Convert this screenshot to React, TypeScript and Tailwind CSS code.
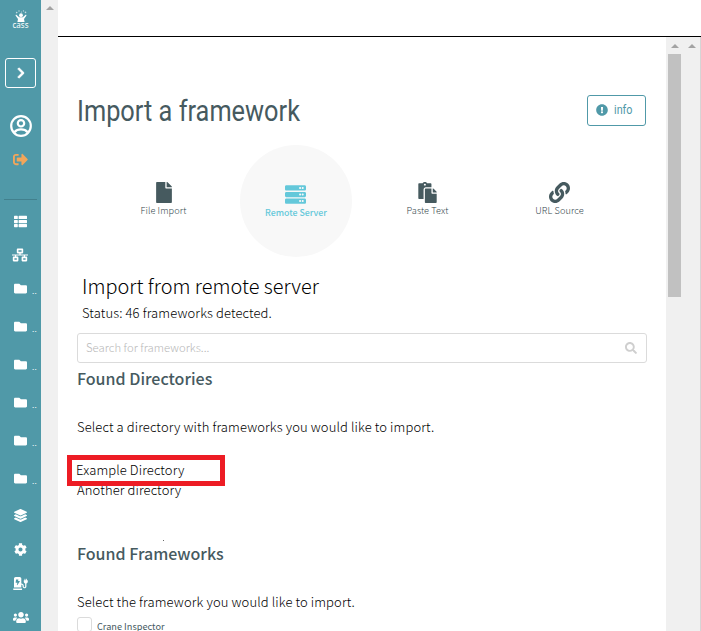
import React from "react";
import {
  FaChargingStation,
  FaChevronRight,
  FaCog,
  FaExclamationCircle,
  FaFile,
  FaFolder,
  FaLayerGroup,
  FaLink,
  FaNetworkWired,
  FaPaste,
  FaSearch,
  FaServer,
  FaSignOutAlt,
  FaThList,
  FaUsers,
} from "react-icons/fa";

const folders = [1, 2, 3, 4, 5, 6];

function CassLogo() {
  return (
    <div className="flex h-[19px] w-[18px] flex-col items-center text-white">
      <svg viewBox="0 0 18 12" className="h-3 w-[18px] shrink-0" fill="currentColor">
        <circle cx="9" cy="5.2" r="1.9" />
        <path d="M4 4.6 L7.2 7.2 H10.8 L14 4.6 L14.5 5.6 L12 9 L12.6 12 H5.4 L6 9 L3.5 5.6 Z" />
        <g opacity=".65">
          <circle cx="4.7" cy="2.6" r=".8" />
          <circle cx="7" cy="1" r=".7" />
          <circle cx="9.5" cy="2" r=".6" />
          <circle cx="11.5" cy=".9" r=".7" />
          <circle cx="13.5" cy="2.4" r=".8" />
        </g>
      </svg>
      <span className="font-['Noto_Sans'] text-[8px] leading-[6px]">cass</span>
    </div>
  );
}

function AccountIcon() {
  return (
    <svg viewBox="0 0 22 22" className="size-[22px]" fill="none" stroke="currentColor" strokeWidth="2.2">
      <circle cx="11" cy="11" r="9.8" />
      <circle cx="11" cy="8.3" r="3.2" />
      <path d="M4.4 17.2 C6 15.2 8.5 14.4 11 14.4 C13.5 14.4 16 15.2 17.6 17.2" />
    </svg>
  );
}

function NavRow({ children }: { children: React.ReactNode }) {
  return <div className="flex h-[34px] shrink-0 items-center justify-center text-white">{children}</div>;
}

function Sidebar() {
  return (
    <nav className="flex w-[41px] shrink-0 flex-col overflow-hidden bg-[#5099a8]">
      <div className="flex h-[58px] shrink-0 justify-center pt-[10px]">
        <CassLogo />
      </div>
      <div className="flex justify-center">
        <button className="flex h-[30px] w-[31px] items-center justify-center rounded-[3px] border border-white text-white">
          <FaChevronRight className="size-3" stroke="currentColor" strokeWidth="30" />
        </button>
      </div>
      <div className="mt-[27px] flex justify-center text-white">
        <AccountIcon />
      </div>
      <div className="mt-[15px] flex justify-center text-[#f2a65a]">
        <FaSignOutAlt className="size-[15px]" />
      </div>
      <div className="mx-1 mt-[32px] h-px shrink-0 bg-[#42808d]" />
      <div className="mt-[4px] flex flex-col">
        <NavRow>
          <FaThList className="size-[13px]" />
        </NavRow>
        <NavRow>
          <FaNetworkWired className="-ml-px h-[14px] w-4" />
        </NavRow>
      </div>
      <div className="-mt-[3px] flex flex-col">
        {folders.map((n) => (
          <div key={n} className="flex h-[38px] shrink-0 items-center pl-[14px] text-white">
            <FaFolder className="size-[13px]" />
            <span className="ml-[5px] mt-[5px] text-[8px] leading-none tracking-[0.4px] text-white">..</span>
          </div>
        ))}
      </div>
      <div className="mt-px flex flex-col">
        <NavRow>
          <FaLayerGroup className="size-[13px]" />
        </NavRow>
        <NavRow>
          <FaCog className="size-[13px]" />
        </NavRow>
        <NavRow>
          <FaChargingStation className="h-[13px] w-[15px]" />
        </NavRow>
        <NavRow>
          <FaUsers className="h-[13px] w-4" />
        </NavRow>
      </div>
    </nav>
  );
}

function ArrowUp() {
  return (
    <svg viewBox="0 0 8 4" className="h-1 w-2" fill="#a3a3a3">
      <path d="M0 4 L4 0 L8 4 Z" />
    </svg>
  );
}

function SourceTab({ icon, label }: { icon: React.ReactNode; label: string }) {
  return (
    <div className="flex w-[132px] flex-col items-center pt-[37px] text-[#465a5f]">
      {icon}
      <span className="-ml-px whitespace-nowrap text-[9.2px] font-light leading-[14px] tracking-[0.08px] text-[#33464b]">{label}</span>
    </div>
  );
}

function ImportPage() {
  return (
    <main className="flex min-w-0 flex-1 flex-col overflow-hidden bg-white pl-[19px] pr-[19px]">
      <header className="flex h-[108px] shrink-0 items-start justify-between pr-px pt-[58px]">
        <h1 className="origin-left scale-x-[0.845] whitespace-nowrap font-[Roboto] text-[30px] leading-[32px] text-[#465a5f]">
          Import a framework
        </h1>
        <button className="flex h-[31px] w-[59px] shrink-0 items-center rounded-[3px] border border-[#5099a8] pb-[2px] pl-[8px] text-[#5099a8]">
          <FaExclamationCircle className="size-3" />
          <span className="ml-[6px] origin-left scale-x-[0.9] font-[Roboto] text-[12px] leading-4">info</span>
        </button>
      </header>

      <div className="flex h-[112px] shrink-0 pl-[21px]">
        <SourceTab icon={<FaFile className="h-[21px] w-4" />} label="File Import" />
        <div className="flex w-[132px] justify-center">
          <div className="flex size-[112px] flex-col items-center rounded-full bg-[#f8f8f8] pt-[39px] text-[#64c8da]">
            <FaServer className="-ml-px size-[21px]" />
            <span className="mt-px whitespace-nowrap text-[8.8px] font-medium leading-[14px]">Remote Server</span>
          </div>
        </div>
        <SourceTab icon={<FaPaste className="-ml-px h-[21px] w-[19px]" />} label="Paste Text" />
        <SourceTab icon={<FaLink className="-ml-px size-[21px]" />} label="URL Source" />
      </div>

      <section className="shrink-0 pl-[5px] pt-[13px]">
        <h2 className="whitespace-nowrap text-[19.9px] font-light leading-[32px] text-black">Import from remote server</h2>
        <p className="whitespace-nowrap text-[13px] font-light leading-[22px] tracking-[0.11px] text-black">Status: 46 frameworks detected.</p>
      </section>

      <div className="mt-[9px] flex h-[30px] shrink-0 items-center justify-between rounded-[3px] border border-[#dbdbdb] pl-2 pr-[9px] text-[#cfcfcf]">
        <span className="pb-[2px] text-[11.3px] font-light leading-4 tracking-[0.04px] text-[#b8b8b8]">Search for frameworks...</span>
        <FaSearch className="size-3" />
      </div>

      <section className="flex h-[178px] shrink-0 flex-col">
        <h3 className="mt-[3px] whitespace-nowrap text-[16px] font-medium leading-6 text-[#465a5f]">Found Directories</h3>
        <p className="mt-[27px] whitespace-nowrap text-[13px] font-light leading-[20px] tracking-[0.11px] text-black">
          Select a directory with frameworks you would like to import.
        </p>
        <div className="relative mt-[43px] text-[13px] font-light leading-[20px] tracking-[0.11px] text-black">
          <p className="whitespace-nowrap">Another directory</p>
          <div className="absolute -left-[10px] -top-[25px] flex h-[31px] w-[158px] items-center border-[5px] border-[#ed1c24] bg-white pb-px pl-1">
            <span className="whitespace-nowrap">Example Directory</span>
          </div>
        </div>
        <span className="ml-[86px] mt-[40px] size-px bg-[#666]" />
      </section>

      <section className="shrink-0">
        <h3 className="whitespace-nowrap text-[16px] font-medium leading-6 text-[#465a5f]">Found Frameworks</h3>
        <p className="mt-[27px] whitespace-nowrap text-[13px] font-light leading-[20px] tracking-[0.11px] text-black">
          Select the framework you would like to import.
        </p>
        <label className="mt-[5px] flex items-start gap-[5px]">
          <span className="size-[15px] rounded-[3px] border border-[#dbdbdb]" />
          <span className="mt-[4px] text-[9.2px] leading-[10px] text-[#465a5f]">Crane Inspector</span>
        </label>
      </section>
    </main>
  );
}

export default function App() {
  return (
    <div className="flex h-[631px] w-[701px] overflow-hidden bg-white font-['Noto_Sans_CJK_SC','Noto_Sans',sans-serif]">
      <Sidebar />
      <div className="flex w-[17px] shrink-0 justify-center bg-[#f0f0f0] pt-[6px]">
        <ArrowUp />
      </div>
      <div className="flex min-w-0 flex-1 flex-col">
        <div className="h-[37px] shrink-0 border-b border-black bg-white" />
        <div className="flex min-h-0 flex-1">
          <ImportPage />
          <div className="flex w-[17px] shrink-0 flex-col items-center bg-[#f0f0f0] pt-[7px]">
            <ArrowUp />
            <div className="mt-[6px] h-[243px] w-[13px] bg-[#c1c1c1]" />
          </div>
          <div className="flex w-[18px] shrink-0 justify-center border-r border-[#d5d5d5] bg-[#f0f0f0] pt-[7px]">
            <ArrowUp />
          </div>
        </div>
      </div>
    </div>
  );
}
